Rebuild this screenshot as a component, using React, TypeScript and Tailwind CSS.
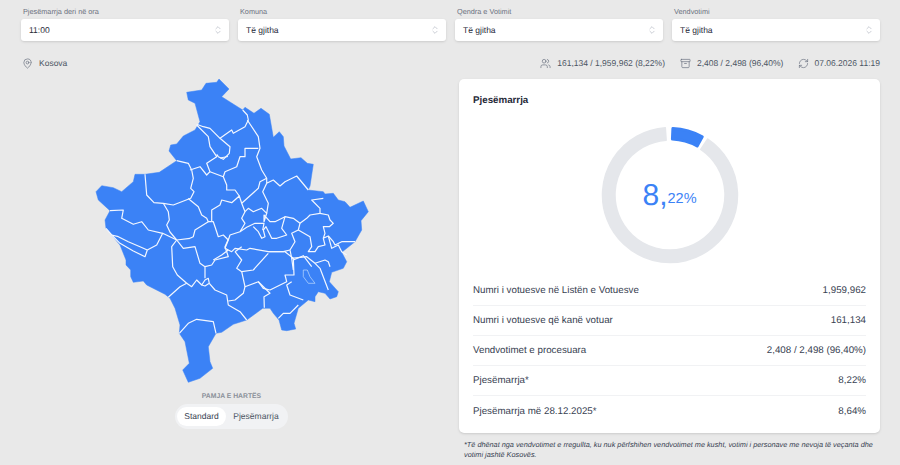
import React from 'react';
import { Archive, ChevronsUpDown, MapPin, RefreshCw, Users } from 'lucide-react';

const FONT = "font-['Liberation_Sans',Arial,sans-serif] [text-rendering:geometricPrecision]";

const outline =
    '186.7,92.3 201.7,90 206,83.3 216.7,82.3 219,79 229,89 221.7,96.7 230,102 242.7,110 245,107.3 254,113.3 261,108.3 269.3,114.3 273.3,137.3 279.3,131.7 283.3,136.7 284,146 290.7,159 301,157.7 307.3,163.3 313.3,164.3 310,186 308,190 323.3,191.7 325,194 333.3,193.3 338.3,200 345,201.7 350,207.3 363.3,201 368.3,211.7 361,220.7 361.7,230 355,241.7 341.7,252.3 346.7,261.7 343.3,268.3 331.7,272.3 329.3,281.7 338.3,291.7 336.7,296.7 330,299 325,293.3 318.3,291.7 315,296.7 315,301.7 308.3,300 298.3,308.3 294,323.3 295.7,329 286.7,330.7 281.7,330 279,320 273.3,313.3 270,308.3 262.7,308.3 246.7,320 233.3,324.3 221.7,332.3 216,333.3 208.3,346.7 210,361.7 212.7,368.3 200,378.3 195,380 188.3,382.3 182.7,370 189.3,363.3 185,341.7 179.3,333.3 180,325 175,308.3 170,298.3 165,294.3 146.7,285 143.3,281 133.3,282.3 130.7,276.7 130.7,270 126,265 126,260 120,245 106,228.3 105,220 110,210.7 98.3,200 96,191.7 101.7,185.7 113.3,187.7 121.7,191.7 133.3,181.7 135,174.3 145,174.3 159.3,172.3 176.7,160.7 169,151 170.7,145 176.7,144 183.3,136 195,130 200,121.7 195,103.3 188.3,100';

// municipality borders, traced by hand
const borders = [
    '196.7,124.3 203.3,126.7 210,128.3 220,138.3 231.7,130 233.3,133.3 245,126.7 248.3,120 247.3,115 242.7,110',
    '196.7,125 208.3,136.7 210,146.7 216.7,156.7 206.7,163.3 210,171.7 223.3,176.7 226.7,185 226.7,190 230,190',
    '220,138.3 230,146.7 229.3,153.3 223.3,159.3 218.3,156.7 216.7,154.3',
    '220,158 228,156.5',
    '247.3,120 258.3,136.7 260,148.3 256.7,156.7 261.7,170 266.7,178.3 266.7,183.3 273.3,180 280,186 285,181.7 296.7,176 308.3,190',
    '258.3,148.3 245,148.3 245,156.7 240,156.7 236.7,166.7 225,171.7 223.3,176.7',
    '190,170 200,166.7 206.7,175 210,171.7',
    '266.7,178.3 260,181.7 258.3,188.3 241.7,203.3',
    '266.7,183.3 262.7,191.7 268.3,203.3 266.7,213.3 261.7,208.3 253.3,211.7 248.3,208.3 245,211.7',
    '230,190 235,190 239.3,196',
    '211.7,221.7 211.7,210 220,205 221.7,200 231.7,202.7 239.3,196 241.7,203.3 245,211.7 241.7,218.3 245,223.3 240,231.7 230,235 228.3,240 223.3,235 218.3,236.7 215,226.7 213.3,221.7 211.7,221.7',
    '190,200 198.3,206.7 201.7,215 206.7,218.3 208.3,221.7 211.7,221.7',
    '208.3,221.7 195,230 193.3,236.7 190,238.3',
    '266.7,213.3 264,221.7 264,215 270,221.7 275,221.7 285,216.7 293.3,218.3 300,223.3 306.7,218.3 310,215 320,213.3 320,208.3 311.7,200 323.3,198.3',
    '240,231.7 246.7,227.3 255,223.3 264,223.3 262.7,230',
    '253.3,226.7 258.3,231.7 261.7,238.3 265,236.7 263.3,230 266,226.7 271.7,238.3 276.7,238.3 286.7,235 281.7,228.3 285,216.7',
    '228.3,240 225,248.3 231.7,251.7 235,248.3 246.7,250 250,248.3 268.3,251.7 283.3,251.7 290,250',
    '320,213.3 328.3,215 330,220 333.3,223.3 329.3,226.7 323.3,226.7 325,233.3 323.3,238.3 328.3,236 333.3,241.7 335,245 341.7,241.7 355,241.7',
    '300,223.3 298.3,230 291.7,233.3 295,241.7 290,250 291.7,258.3 293.3,270',
    '298.3,230 310,236.7 311.7,246.7 308.3,251.7 315,251.7 318.3,246.7 325,245 323.3,238.3',
    '328.3,236 331.7,248.3 338.3,245 341.7,251.7 346.7,255',
    '291.7,258.3 306.7,256.7 315,263.3 325,260 328.3,261.7 330,266.7',
    '315,263.3 320,268.3 328.3,290',
    '176.7,160.7 188.3,163.3 191.7,170 193.3,178.3 190.7,188.3 194,191.7 190.7,198.3 181.7,201.7 173.3,205 163.3,203.3 154,202.7 146.7,195 145,174.3',
    '188.3,198.3 190,200',
    '163.3,203.3 168.3,211.7 169.3,220 166.7,225 170,232 176.7,240',
    '110,210.7 123.3,210 121.7,218.3 133.3,224.3 141.7,221.7 148.3,230 162.7,233.3',
    '106,228.3 111.7,235 120,243.3 133.3,251 145,256.7 147.3,250 156.7,245 162.7,233.3 176.7,240',
    '111.7,235 118.3,236.7 128.3,241.7 140,246.7 147.3,250',
    '176.7,240 171.7,246.7 172.7,266.7 177.3,275 186.7,283.3 180,286.7 168.3,297.3',
    '186.7,283.3 191.7,286.7 196.7,280 201.7,285 205,280 208.3,278.3 209.3,283.3 205,286 201.7,285',
    '205,278.3 205,266.7 211.7,265 215,260 228.3,256.7 225,246.7 228,240',
    '176.7,240 183.3,248.3 195,246.7 200,263.3 205,266.7',
    '176.7,240 190,238.3',
    '209.3,283.3 215,290 226.7,295 228.3,305 240,311.7 246.7,320',
    '228.3,301 235,300 243.3,293.3 245,286.7',
    '179.3,333.3 188.3,323.3 196.7,319.3 213.3,321.7 216,333.3',
    '235,251.7 241.7,246.7',
    '213.3,260 221.7,255 228.3,250',
    '268.3,251.7 285,251.7 293.3,258.3 294,275 285,275 286.7,281.7 270,290 263.3,288.3 258.3,281.7 245,286.7 241.7,271.7 236.7,268.3 241.7,260 235,251.7',
    '241.7,271.7 253.3,270 268.3,253.3',
    '258.3,281.7 270,293.3 264,296.7 264.3,307.7',
    '291.7,281.7 286.7,285 290,295 303.3,300',
    '298.3,305 290,313.3 283.3,313.3 278.3,318.3',
    '293.3,260 303.3,255.7 311.7,266.7',
];

const KosovoMap = () => (
    <svg viewBox="90 75 285 310" className="block w-[285px] h-[310px]">
        <polygon points={outline} fill="#3b82f6" stroke="#3b82f6" strokeWidth="0.5" strokeLinejoin="round" />
        {borders.map((points, index) => (
            <polyline key={index} points={points} fill="none" stroke="#f3f7ff" strokeWidth="1.2" strokeLinejoin="round" />
        ))}
        <polygon
            points="303.3,270 307.3,270 310,276.7 315,283.3 308.3,283.3 303.3,276.7"
            fill="none"
            stroke="#bfdbfe"
            strokeWidth="0.7"
        />
    </svg>
);

const sector = (startDeg: number, endDeg: number, outer: number, inner: number) => {
    const point = (deg: number, r: number) => {
        const a = (deg * Math.PI) / 180;
        return `${(70 + r * Math.sin(a)).toFixed(2)} ${(70 - r * Math.cos(a)).toFixed(2)}`;
    };
    const large = endDeg - startDeg > 180 ? 1 : 0;
    return `M${point(startDeg, outer)}A${outer} ${outer} 0 ${large} 1 ${point(endDeg, outer)}L${point(endDeg, inner)}A${inner} ${inner} 0 ${large} 0 ${point(startDeg, inner)}Z`;
};

const Donut = () => (
    <div className="relative w-[140px] h-[140px]">
        <svg viewBox="0 0 140 140" className="block w-full h-full">
            <path d={sector(34, 356, 67.5, 55)} fill="#e5e7eb" stroke="#e5e7eb" strokeWidth="1.5" strokeLinejoin="round" />
            <path d={sector(2.5, 29, 66.5, 56)} fill="#3b82f6" stroke="#3b82f6" strokeWidth="3" strokeLinejoin="round" />
        </svg>
        <div className="absolute inset-0 flex items-center justify-center pt-[2px] text-[#3b82f6]">
            <span className="text-[30px] leading-none">8,</span>
            <span className="mt-[6px] text-[14.5px] leading-none">22%</span>
        </div>
    </div>
);

const filters = [
    { label: 'Pjesëmarrja deri në ora', value: '11:00' },
    { label: 'Komuna', value: 'Të gjitha' },
    { label: 'Qendra e Votimit', value: 'Të gjitha' },
    { label: 'Vendvotimi', value: 'Të gjitha' },
];

const rows = [
    ['Numri i votuesve në Listën e Votuesve', '1,959,962'],
    ['Numri i votuesve që kanë votuar', '161,134'],
    ['Vendvotimet e procesuara', '2,408 / 2,498 (96,40%)'],
    ['Pjesëmarrja*', '8,22%'],
    ['Pjesëmarrja më 28.12.2025*', '8,64%'],
];

const App: React.FC = () => {
    return (
        <div className={`${FONT} w-[900px] h-[465px] overflow-hidden bg-[#e9e9e9] pl-[21px] pr-[20px] pt-[5px]`}>
            <div className="grid grid-cols-4 gap-[9px]">
                {filters.map((filter) => (
                    <div key={filter.label}>
                        <div className="h-[14px] px-[2px] text-[7.3px] leading-[13px] text-[#6b7280]">{filter.label}</div>
                        <div className="flex h-[22px] items-center justify-between rounded-[3px] bg-white pl-[8px] pr-[6px] text-[8.5px] text-[#1f2937] shadow-sm">
                            <span>{filter.value}</span>
                            <ChevronsUpDown className="w-[10px] h-[10px] text-[#9ca3af]" strokeWidth={1.25} />
                        </div>
                    </div>
                ))}
            </div>

            <div className="mt-[15px] flex h-[14px] items-center justify-between pl-[1px] text-[8.5px] text-[#4b5563]">
                <div className="flex items-center gap-[6px]">
                    <MapPin className="w-[11px] h-[11px] text-[#6b7280]" strokeWidth={1.5} />
                    <span>Kosova</span>
                </div>
                <div className="flex items-center gap-[15px]">
                    <div className="flex items-center gap-[6px]">
                        <Users className="w-[11px] h-[11px] text-[#6b7280]" strokeWidth={1.5} />
                        <span>161,134 / 1,959,962 (8,22%)</span>
                    </div>
                    <div className="flex items-center gap-[6px]">
                        <Archive className="w-[11px] h-[11px] text-[#6b7280]" strokeWidth={1.5} />
                        <span>2,408 / 2,498 (96,40%)</span>
                    </div>
                    <div className="flex items-center gap-[5px]">
                        <RefreshCw className="w-[11px] h-[11px] text-[#6b7280]" strokeWidth={1.5} />
                        <span>07.06.2026 11:19</span>
                    </div>
                </div>
            </div>

            <div className="mt-[9px] flex justify-between">
                <div className="flex w-[421px] flex-col items-center">
                    <div className="-mt-[4px] ml-[2px]">
                        <KosovoMap />
                    </div>
                    <div className="mt-[7px] text-[6.8px] font-bold leading-[10px] text-[#8b9099]">PAMJA E HARTËS</div>
                    <div className="mt-[2px] flex h-[25px] w-[113px] items-center rounded-full bg-[#f1f2f4] px-[2px] text-[8.5px]">
                        <span className="flex h-[19px] w-[49px] items-center justify-center rounded-full bg-white text-[#374151]">
                            Standard
                        </span>
                        <span className="flex-1 text-center text-[#4b5563]">Pjesëmarrja</span>
                    </div>
                </div>

                <div className="w-[421px]">
                    <div className="h-[354px] rounded-[5px] bg-white px-[14px] pt-[15px] shadow-sm">
                        <h2 className="h-[14px] text-[9.75px] font-bold leading-[14px] text-[#1f2937]">Pjesëmarrja</h2>
                        <div className="mt-[17px] flex justify-center">
                            <Donut />
                        </div>
                        <div className="mt-[11px]">
                            {rows.map(([label, value], index) => (
                                <div
                                    key={label}
                                    className={`flex h-[30px] items-center justify-between pt-[2px] text-[9.75px] text-[#374151] ${index < rows.length - 1 ? 'border-b border-[#f1f2f4]' : ''}`}
                                >
                                    <span>{label}</span>
                                    <span>{value}</span>
                                </div>
                            ))}
                        </div>
                    </div>
                    <p className="mt-[7px] px-[5px] text-[7.3px] italic leading-[10px] text-[#374151]">
                        *Të dhënat nga vendvotimet e rregullta, ku nuk përfshihen vendvotimet me kusht, votimi i personave me nevoja të veçanta dhe votimi jashtë Kosovës.
                    </p>
                </div>
            </div>
        </div>
    );
};

export default App;
